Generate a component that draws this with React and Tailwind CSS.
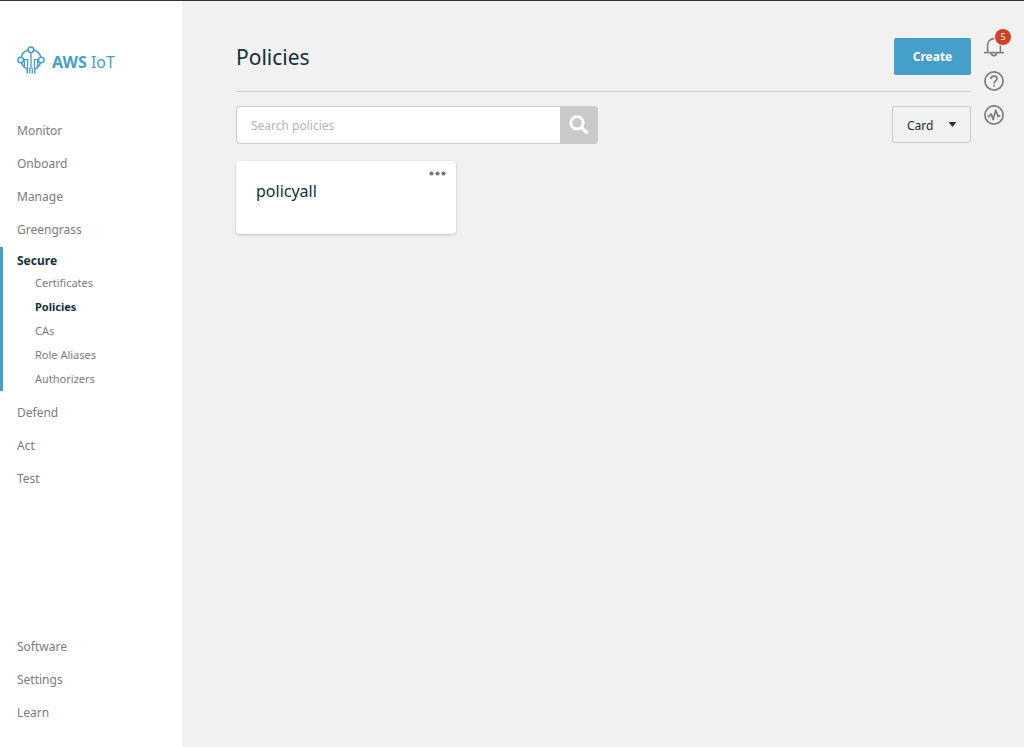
import React from "react";

const topLinks = ["Monitor", "Onboard", "Manage", "Greengrass"];
const secureLinks = ["Certificates", "Policies", "CAs", "Role Aliases", "Authorizers"];
const moreLinks = ["Defend", "Act", "Test"];
const bottomLinks = ["Software", "Settings", "Learn"];

function Logo() {
  return (
    <svg width="28" height="28" viewBox="0 0 28 28" fill="none" stroke="#459fc9" strokeWidth="1.5">
      <circle cx="14" cy="3.8" r="2.8" />
      <circle cx="3.7" cy="14" r="2.8" />
      <circle cx="24.3" cy="14" r="2.8" />
      <path d="M11.2 4A11 11 0 0 0 4 11.2M16.8 4A11 11 0 0 1 24 11.2" />
      <path d="M4.4 16.8A11 11 0 0 0 10.2 23.2V27.4M23.6 16.8A11 11 0 0 1 17.8 23.2V27.4" />
      <path d="M7.4 20.4V13.6H10.6V22.4M20.6 20.4V13.6H17.4V22.4" strokeWidth="1.3" />
      <path d="M14 6.6V22.4M12.7 22V27.4M15.3 22V27.4" strokeWidth="1.3" />
    </svg>
  );
}

function BellIcon() {
  return (
    <svg width="20" height="20" viewBox="0 0 20 20" fill="none" stroke="#7d7d7d" strokeWidth="1.6">
      <path d="M0 15.6h20" />
      <path d="M3.6 15.6V8.2C3.6 4.4 6.4 1.6 10 1.6s6.4 2.8 6.4 6.6v7.4" />
      <path d="M7.2 15.6c.2 2 1.3 3 2.8 3s2.6-1 2.8-3" />
    </svg>
  );
}

function HelpIcon() {
  return (
    <svg width="20" height="20" viewBox="0 0 20 20" fill="none" stroke="#7d7d7d" strokeWidth="1.7">
      <circle cx="10" cy="10" r="9.1" />
      <path d="M7 8c0-1.8 1.2-2.9 3-2.9s3 1.1 3 2.6c0 2.1-2.9 2.3-2.9 4.7" />
      <path d="M10.1 13.8v1.7" />
    </svg>
  );
}

function PulseIcon() {
  return (
    <svg width="20" height="20" viewBox="0 0 20 20" fill="none" stroke="#7d7d7d" strokeWidth="1.7">
      <circle cx="10" cy="10" r="9.1" />
      <path d="M3.6 11.4h1.4l2.2-2.4 1.9 5.6 2.6-9.4 2.4 6.2 2.2-1" strokeLinejoin="round" />
    </svg>
  );
}

function NavLink({ children }) {
  return (
    <a href="#" className="flex h-[33px] items-center pl-[17px]">
      {children}
    </a>
  );
}

export default function App() {
  return (
    <div className="flex min-h-screen border-t border-[#2c3647] bg-[#f1f1f1] font-['Noto_Sans',sans-serif] text-[#16303a]">
      {/* Sidebar */}
      <aside className="flex w-[182px] shrink-0 flex-col bg-white pb-[18px] text-xs text-[#7c7c7c]">
        <a href="#" className="mt-[45px] mb-10 flex h-7 items-center gap-[7px] pl-[17px] text-base text-[#459fc9]">
          <Logo />
          <span className="pt-1">
            <b>AWS</b> IoT
          </span>
        </a>
        <nav>
          {topLinks.map((label) => (
            <NavLink key={label}>{label}</NavLink>
          ))}
          <div className="mt-px mb-[5px] border-l-3 border-[#459fc9] pt-1">
            <a href="#" className="flex h-5 items-center pl-3.5 font-bold text-[#16303a]">
              Secure
            </a>
            {secureLinks.map((label) => (
              <a
                key={label}
                href="#"
                className={
                  label === "Policies"
                    ? "flex h-6 items-center pl-8 text-[11px] font-bold text-[#16303a]"
                    : "flex h-6 items-center pl-8 text-[11px]"
                }
              >
                {label}
              </a>
            ))}
          </div>
          {moreLinks.map((label) => (
            <NavLink key={label}>{label}</NavLink>
          ))}
        </nav>
        <nav className="mt-auto">
          {bottomLinks.map((label) => (
            <NavLink key={label}>{label}</NavLink>
          ))}
        </nav>
      </aside>

      {/* Content */}
      <main className="flex-1 pl-[54px]">
        <header className="flex h-[91px] items-end justify-between border-b border-[#cfcfcf] pb-4">
          <h1 className="text-[21px] leading-9">Policies</h1>
          <button className="h-[37px] w-[77px] rounded-xs bg-[#459fc9] text-xs font-bold text-white">
            Create
          </button>
        </header>

        <div className="mt-3.5 flex items-start justify-between">
          <form className="flex h-[38px] w-[362px]">
            <input
              type="text"
              aria-label="Search policies"
              placeholder="Search policies"
              className="min-w-0 flex-1 rounded-l-sm border border-r-0 border-[#cccccc] bg-white px-3.5 pt-0.5 text-xs outline-none placeholder:text-[#b5b5b5]"
            />
            <button
              type="button"
              aria-label="Search"
              className="flex w-[38px] items-center justify-center rounded-r-sm bg-[#cacaca]"
            >
              <svg width="20" height="20" viewBox="0 0 20 20" fill="none" stroke="white" strokeWidth="2.8">
                <circle cx="8" cy="7.8" r="6.2" />
                <path d="M13 12.8l4.6 4.6" strokeWidth="3.2" strokeLinecap="round" />
              </svg>
            </button>
          </form>
          <div className="relative">
            <select
              aria-label="View"
              className="h-[37px] w-[79px] appearance-none rounded-xs border border-[#cccccc] bg-transparent pt-0.5 pl-3.5 text-xs"
            >
              <option>Card</option>
              <option>List</option>
            </select>
            <svg className="pointer-events-none absolute top-4 right-3.5" width="9" height="5" viewBox="0 0 9 5">
              <path d="M0.5 0h8L4.5 5z" fill="#333333" />
            </svg>
          </div>
        </div>

        {/* Policy cards */}
        <div className="mt-[17px] flex flex-wrap gap-4">
          <article className="relative h-[73px] w-[220px] rounded-sm bg-white pt-[18px] pl-5 shadow-[0_1px_3px_rgba(0,0,0,0.2)]">
            <h2 className="text-base">policyall</h2>
            <button aria-label="More actions" className="absolute top-2.5 right-2.5">
              <svg width="17" height="5" viewBox="0 0 17 5" fill="#777777">
                <circle cx="2.5" cy="2.5" r="2.1" />
                <circle cx="8.5" cy="2.5" r="2.1" />
                <circle cx="14.5" cy="2.5" r="2.1" />
              </svg>
            </button>
          </article>
        </div>
      </main>

      {/* Icon rail */}
      <aside className="flex w-[53px] shrink-0 flex-col gap-3.5 pt-9 pl-[13px]">
        <button aria-label="Notifications" className="relative size-5">
          <BellIcon />
          <span className="absolute -top-2 left-[11px] flex size-4 items-center justify-center rounded-full bg-[#d13f24] text-[9px] text-white ring-1 ring-[#f1f1f1]">
            5
          </span>
        </button>
        <button aria-label="Help" className="size-5">
          <HelpIcon />
        </button>
        <button aria-label="Activity" className="size-5">
          <PulseIcon />
        </button>
      </aside>
    </div>
  );
}
